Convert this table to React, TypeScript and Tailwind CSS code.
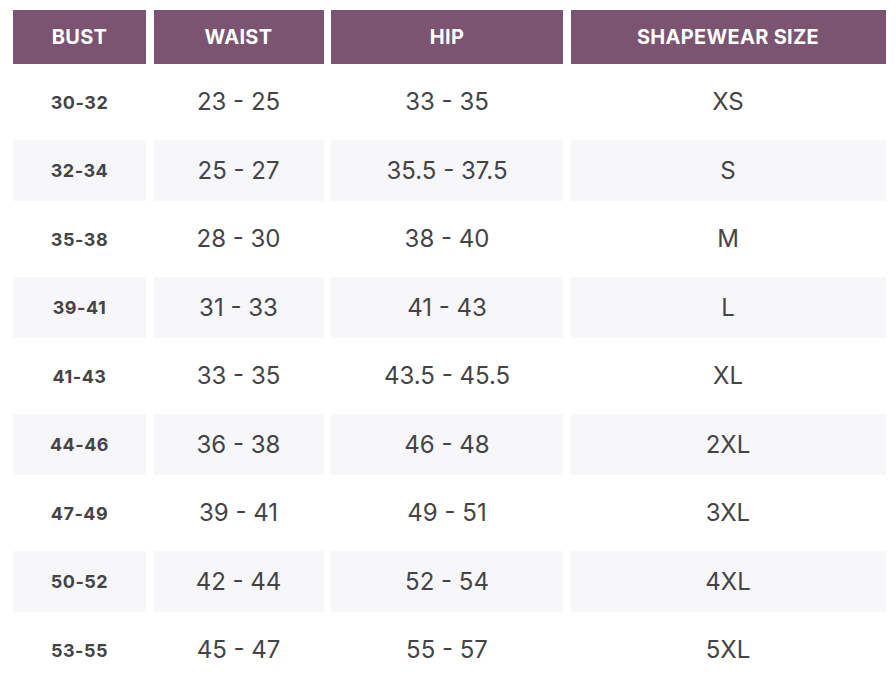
import React from "react";

const rows: [string, string, string, string][] = [
  ["30-32", "23 - 25", "33 - 35", "XS"],
  ["32-34", "25 - 27", "35.5 - 37.5", "S"],
  ["35-38", "28 - 30", "38 - 40", "M"],
  ["39-41", "31 - 33", "41 - 43", "L"],
  ["41-43", "33 - 35", "43.5 - 45.5", "XL"],
  ["44-46", "36 - 38", "46 - 48", "2XL"],
  ["47-49", "39 - 41", "49 - 51", "3XL"],
  ["50-52", "42 - 44", "52 - 54", "4XL"],
  ["53-55", "45 - 47", "55 - 57", "5XL"],
];

const headers = ["BUST", "WAIST", "HIP", "SHAPEWEAR SIZE"];

const App: React.FC = () => {
  return (
    <div className="w-[896px] h-[691px] bg-white pt-[10px] pl-[13px] font-['Inter','Liberation_Sans',sans-serif]">
      <div className="grid grid-cols-[133px_170px_232px_315px] grid-rows-[54px_repeat(9,61px)] gap-x-[7.5px] gap-y-[7.5px]">
        {headers.map((h) => (
          <div
            key={h}
            className="bg-[#7a5471] text-white font-bold text-[20px] tracking-[0.3px] flex items-center justify-center"
          >
            {h}
          </div>
        ))}
        {rows.map((r, i) => {
          const bg = i % 2 === 1 ? "bg-[#f7f6f8]" : "bg-white";
          return (
            <React.Fragment key={r[0]}>
              <div
                className={`${bg} flex items-center justify-center text-[18px] font-bold text-[#444447] tracking-[0.5px]`}
              >
                {r[0]}
              </div>
              <div className={`${bg} flex items-center justify-center text-[24px] text-[#444447]`}>
                {r[1]}
              </div>
              <div className={`${bg} flex items-center justify-center text-[24px] text-[#444447]`}>
                {r[2]}
              </div>
              <div className={`${bg} flex items-center justify-center text-[24px] text-[#444447]`}>
                {r[3]}
              </div>
            </React.Fragment>
          );
        })}
      </div>
    </div>
  );
};

export default App;
